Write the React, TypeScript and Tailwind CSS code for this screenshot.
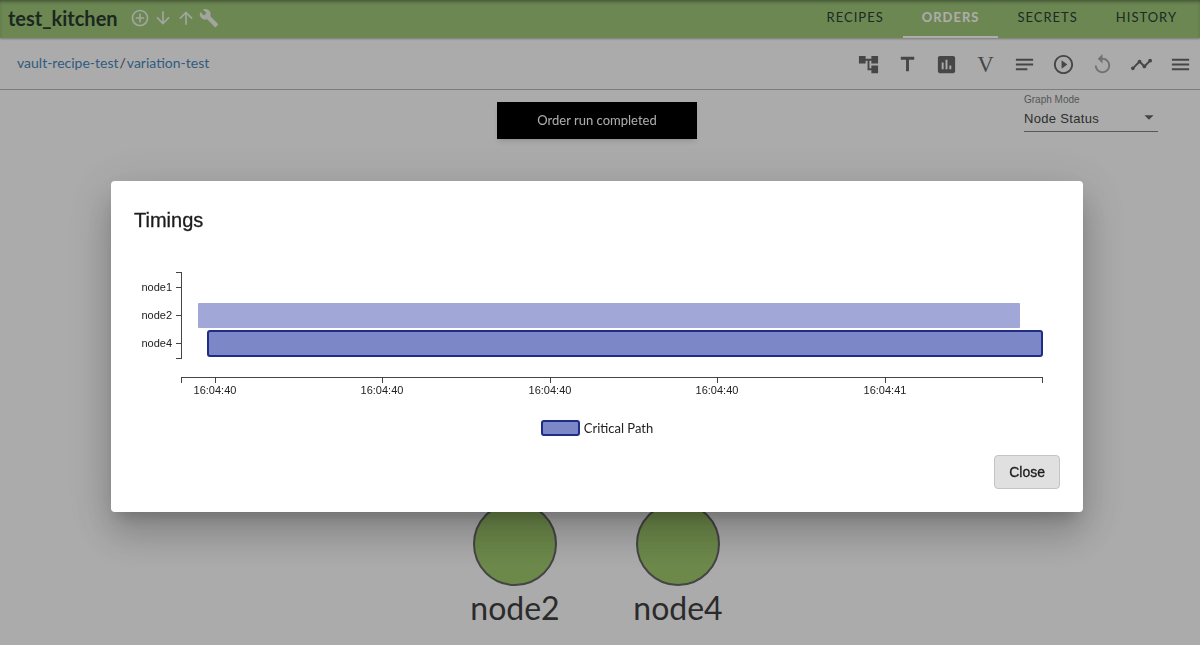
import type { IconType } from "react-icons";
import {
  MdAccountTree,
  MdAddCircleOutline,
  MdArrowDownward,
  MdArrowDropDown,
  MdArrowUpward,
  MdAssessment,
  MdBuild,
  MdMenu,
  MdNotes,
  MdPlayCircleOutline,
  MdReplay,
  MdTimeline,
  MdTitle,
} from "react-icons/md";

const tabs = ["RECIPES", "ORDERS", "SECRETS", "HISTORY"];

const headerActions: { label: string; icon: IconType }[] = [
  { label: "Add", icon: MdAddCircleOutline },
  { label: "Download", icon: MdArrowDownward },
  { label: "Upload", icon: MdArrowUpward },
  { label: "Settings", icon: MdBuild },
];

const tools: { label: string; icon?: IconType; disabled?: boolean }[] = [
  { label: "Graph", icon: MdAccountTree },
  { label: "Text", icon: MdTitle },
  { label: "Report", icon: MdAssessment },
  { label: "Variables" },
  { label: "Notes", icon: MdNotes },
  { label: "Run", icon: MdPlayCircleOutline },
  { label: "Replay", icon: MdReplay, disabled: true },
  { label: "Timings", icon: MdTimeline },
  { label: "Menu", icon: MdMenu },
];

const graphNodes = [
  { name: "node2", x: 515 },
  { name: "node4", x: 678 },
];

const rows = [
  { name: "node1", y: 25 },
  { name: "node2", y: 53 },
  { name: "node4", y: 81 },
];

const ticks = [
  { x: 81, label: "16:04:40" },
  { x: 248, label: "16:04:40" },
  { x: 416, label: "16:04:40" },
  { x: 583, label: "16:04:40" },
  { x: 751, label: "16:04:41" },
];

function Header() {
  return (
    <header className="flex h-[38px] items-stretch justify-between bg-[#9fc87a] pr-1 shadow-[inset_0_3px_4px_-2px_rgba(0,0,0,0.5),0_1px_2px_rgba(0,0,0,0.3)]">
      <div className="flex items-center pb-0.5 pl-2">
        <h1 className="mr-3 text-xl font-bold text-[#2a3a30]">test_kitchen</h1>
        <div className="flex items-center gap-[3px]">
          {headerActions.map(({ label, icon: Icon }) => (
            <button key={label} type="button" aria-label={label} className="text-[#eef4e8]">
              <Icon size={20} />
            </button>
          ))}
        </div>
      </div>
      <nav className="flex">
        {tabs.map((tab) => (
          <a
            key={tab}
            href="#"
            className={
              tab === "ORDERS"
                ? "flex items-center border-b-2 border-white px-[19px] pb-px text-[13px] font-bold tracking-[1px] text-white"
                : "flex items-center border-b-2 border-transparent px-[19px] pb-px text-[13px] tracking-[1px] text-[#2a4034]"
            }
          >
            {tab}
          </a>
        ))}
      </nav>
    </header>
  );
}

function Toolbar() {
  return (
    <div className="flex h-[52px] items-center justify-between border-b border-[#b8b8b8] pt-0.5 pr-2 pl-[17px]">
      <p className="pb-1 text-sm text-[#555]">
        <a href="#" className="text-[#4a86b8]">
          vault-recipe-test
        </a>
        <span className="mx-px">/</span>
        <a href="#" className="text-[#4a86b8]">
          variation-test
        </a>
      </p>
      <div className="flex items-center gap-4">
        {tools.map(({ label, icon: Icon, disabled }) => (
          <button
            key={label}
            type="button"
            aria-label={label}
            disabled={disabled}
            className="flex size-[23px] items-center justify-center text-[#686868] disabled:text-[#a8a8a8]"
          >
            {Icon ? (
              <Icon size={23} />
            ) : (
              <span className="font-['Liberation_Serif',serif] text-[23px] leading-none">V</span>
            )}
          </button>
        ))}
      </div>
    </div>
  );
}

function GraphMode() {
  return (
    <div className="mr-[42px] ml-auto w-[134px] pt-1 font-['Liberation_Sans',sans-serif]">
      <label htmlFor="graph-mode" className="block text-[10px] leading-3 text-[#808080]">
        Graph Mode
      </label>
      <div className="relative border-b border-[#808080]">
        <select
          id="graph-mode"
          className="h-6 w-full appearance-none bg-transparent text-[13px] tracking-wide text-[#444]"
        >
          <option>Node Status</option>
        </select>
        <MdArrowDropDown
          size={22}
          className="pointer-events-none absolute top-0 -right-0.5 text-[#666]"
        />
      </div>
    </div>
  );
}

function Graph() {
  return (
    <svg viewBox="0 0 1200 514" className="block w-full">
      {graphNodes.map((node) => (
        <g key={node.name}>
          <circle cx={node.x} cy="412" r="41" fill="#a0ca6e" stroke="#666" strokeWidth="2" />
          <text x={node.x} y="488" textAnchor="middle" fontSize="32" fill="#404040">
            {node.name}
          </text>
        </g>
      ))}
    </svg>
  );
}

function TimingsChart() {
  return (
    <svg
      viewBox="0 0 926 140"
      className="block w-full font-['Liberation_Sans',sans-serif]"
      fontSize="11"
      fill="#222"
    >
      <g fill="none" stroke="#444" shapeRendering="crispEdges">
        <path d="M42 10.5H47.5V96.5H42" />
        <path d="M47.5 121V115.5H908.5V121" />
        {rows.map((row) => (
          <path key={row.name} d={`M42 ${row.y}.5H47`} />
        ))}
        {ticks.map((tick) => (
          <path key={tick.x} d={`M${tick.x}.5 116V121`} />
        ))}
      </g>
      {rows.map((row) => (
        <text key={row.name} x="38" y={row.y + 4} textAnchor="end">
          {row.name}
        </text>
      ))}
      {ticks.map((tick) => (
        <text key={tick.x} x={tick.x} y="132" textAnchor="middle">
          {tick.label}
        </text>
      ))}
      <rect x="64" y="41" width="822" height="25" rx="1" fill="#a1a7d6" />
      <rect x="74" y="69" width="834" height="25" rx="2" fill="#7c87c8" stroke="#1f2d86" strokeWidth="2" />
    </svg>
  );
}

function TimingsDialog() {
  return (
    <div className="fixed inset-0 flex items-center justify-center bg-black/32 pt-12 pr-[6px]">
      <div
        role="dialog"
        aria-labelledby="timings-title"
        className="w-[972px] max-w-[82%] rounded bg-white px-[23px] pt-[23px] pb-[23px] shadow-[0_11px_15px_-7px_rgba(0,0,0,0.2),0_24px_38px_3px_rgba(0,0,0,0.14),0_9px_46px_8px_rgba(0,0,0,0.12)]"
      >
        <h2
          id="timings-title"
          className="mb-[26px] font-['Liberation_Sans',sans-serif] text-xl leading-8 text-[#1c1c1c] [-webkit-text-stroke:0.3px]"
        >
          Timings
        </h2>
        <TimingsChart />
        <div className="mt-4 flex items-center justify-center gap-1 text-[13px] leading-5 text-[#222]">
          <span className="h-4 w-[39px] rounded-[3px] border-2 border-[#1f2d86] bg-[#7c87c8]" />
          Critical Path
        </div>
        <div className="mt-[17px] flex justify-end">
          <button
            type="button"
            className="h-[34px] rounded border border-[#c4c4c4] bg-[#e0e0e0] px-[14px] font-['Liberation_Sans',sans-serif] text-sm text-[#1c1c1c] [-webkit-text-stroke:0.3px]"
          >
            Close
          </button>
        </div>
      </div>
    </div>
  );
}

export default function App() {
  return (
    <div className="min-h-screen overflow-hidden bg-[#fdfdfd] font-[Lato,sans-serif]">
      <Header />
      <Toolbar />
      <main>
        <GraphMode />
        <Graph />
      </main>
      <div
        role="status"
        className="fixed top-[102px] right-[6px] left-0 mx-auto w-fit bg-black px-10 py-2 text-[13px] leading-[21px] text-white shadow-md"
      >
        Order run completed
      </div>
      <TimingsDialog />
    </div>
  );
}
